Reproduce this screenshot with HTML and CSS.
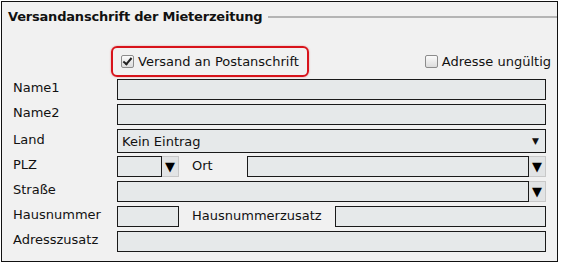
FILE: index.html
```html
<!DOCTYPE html>
<html lang="de">
<head>
<meta charset="utf-8">
<link rel="stylesheet" href="styles.css">
</head>
<body>
<div class="panel">
  <div class="head">
    <span class="title">Versandanschrift der Mieterzeitung</span>
    <span class="rule"></span>
  </div>
  <div class="checks">
    <label class="hl"><span class="cb checked"></span>Versand an Postanschrift</label>
    <label class="cb-right"><span class="cb"></span>Adresse ungültig</label>
  </div>
  <div class="form">
    <div class="row"><span class="lbl">Name1</span><span class="inp grow"></span></div>
    <div class="row"><span class="lbl">Name2</span><span class="inp grow"></span></div>
    <div class="row land"><span class="lbl">Land</span><span class="inp grow sel"><span class="val">Kein Eintrag</span><span class="arrow-sm">▼</span></span></div>
    <div class="row"><span class="lbl">PLZ</span><span class="inp plz"></span><span class="btn">▼</span><span class="lbl2 ort">Ort</span><span class="inp grow"></span><span class="btn">▼</span></div>
    <div class="row"><span class="lbl">Straße</span><span class="inp grow"></span><span class="btn">▼</span></div>
    <div class="row"><span class="lbl">Hausnummer</span><span class="inp hnr"></span><span class="lbl2 hz">Hausnummerzusatz</span><span class="inp grow"></span></div>
    <div class="row"><span class="lbl">Adresszusatz</span><span class="inp grow"></span></div>
  </div>
</div>
</body>
</html>
```
FILE: styles.css
```css
html, body { margin: 0; padding: 0; background: #fff; }
body { font-family: "DejaVu Sans", Verdana, sans-serif; font-size: 13px; color: #111; }
.panel {
  margin: 1px;
  width: 555px;
  height: 259px;
  border: 1px solid #111;
  background: #f1f1f1;
  box-sizing: content-box;
}
.head { display: flex; align-items: center; height: 27px; padding-left: 6px; }
.title { font-weight: bold; font-size: 13px; letter-spacing: -0.2px; white-space: nowrap; margin-top: 1px; }
.rule { flex: 1; height: 2px; background: #b4b4b4; margin-left: 6px; margin-top: 3px; }
.checks { display: flex; align-items: center; height: 42px; padding-left: 109px; padding-right: 6px; margin-top: 11px; }
.hl {
  display: flex; align-items: center;
  border: 2px solid #d8131b; border-radius: 6px;
  box-shadow: 0 0 2px rgba(200,0,0,.4);
  padding-left: 8px; box-sizing: border-box; width: 198px; height: 31px;
}
.cb-right { display: flex; align-items: center; margin-left: auto; }
.cb {
  display: inline-block; width: 11px; height: 11px;
  border: 1px solid #8c8c8c; border-radius: 2px;
  background: linear-gradient(#fbfbfb, #dcdcdc);
  margin-right: 4px; position: relative;
}
.cb.checked::after {
  content: ""; position: absolute; left: 3px; top: 0px; width: 3px; height: 7px;
  border: solid #222; border-width: 0 2px 2px 0; transform: rotate(40deg);
}
.form { padding-left: 11px; padding-right: 11px; margin-top: -3px; }
.row { display: flex; align-items: center; height: 21px; margin-bottom: 4px; }
.row.land { height: 24px; margin-bottom: 3px; }
.lbl { width: 104px; flex: none; margin-top: -4px; }
.lbl2 { flex: none; margin-top: -3px; }
.inp {
  height: 21px; box-sizing: border-box;
  border: 1px solid #1a1a1a; background: #e6e9ea;
  display: flex; align-items: center;
}
.grow { flex: 1; }
.sel { height: 24px; justify-content: space-between; padding: 0 6px 0 4px; }
.arrow-sm { font-size: 9px; }
.plz { width: 45px; flex: none; }
.hnr { width: 62px; flex: none; }
.btn {
  width: 17px; height: 21px; flex: none; box-sizing: border-box;
  background: #e2e4e5; border: 1px solid #c8c8c8; border-left: none;
  font-size: 13px; display: flex; align-items: center; justify-content: center; color: #000;
}
.ort { margin-left: 13px; width: 55px; }
.hz { margin-left: 13px; width: 143px; }
```
